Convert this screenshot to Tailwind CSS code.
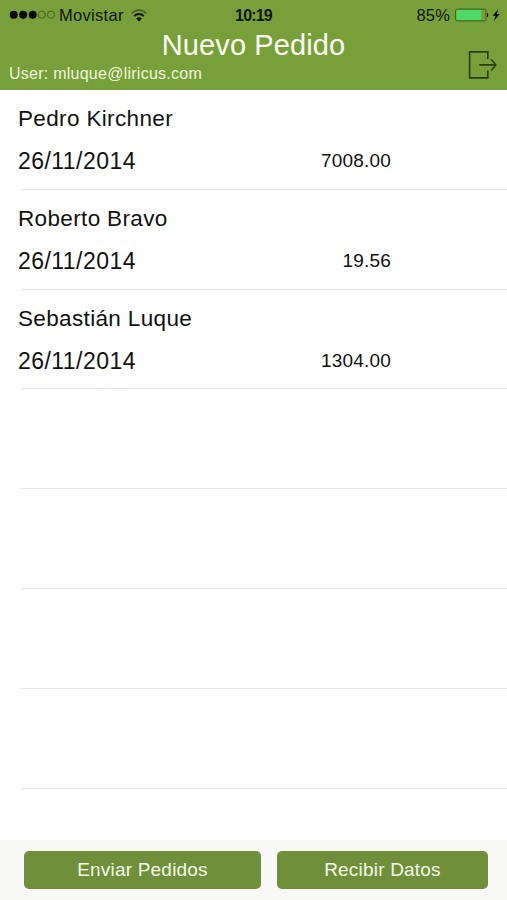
<!DOCTYPE html>
<html lang="es">
<head>
  <meta charset="utf-8">
  <meta name="viewport" content="width=device-width, initial-scale=1">
  <title>Nuevo Pedido</title>
  <script src="https://cdn.jsdelivr.net/npm/@tailwindcss/browser@4"></script>
</head>
<body class="bg-white font-['Liberation_Sans',Arial,sans-serif]">
<div class="flex h-[900px] w-[507px] flex-col overflow-hidden bg-white text-[#111]">

  <header class="h-[90px] shrink-0 bg-[#78a03a]">
    <!-- Status bar -->
    <div class="grid h-[30px] grid-cols-3 items-center text-[#0c1604]">
      <div class="flex h-[29px] items-center pl-[9px]">
        <svg class="h-[10px] w-[47px]" viewBox="0 0 47 10">
          <g fill="#050a02"><circle cx="4.7" cy="4.7" r="4"/><circle cx="14.2" cy="4.7" r="4"/><circle cx="23.7" cy="4.7" r="4"/></g>
          <g fill="none" stroke="#3f5a1c" stroke-width=".9"><circle cx="32.7" cy="4.7" r="3.6"/><circle cx="42" cy="4.7" r="3.6"/></g>
        </svg>
        <span class="ml-[3px] pt-px text-[16.5px] leading-[29px] tracking-[0.3px]">Movistar</span>
        <svg class="ml-[7px] h-[13px] w-[16px]" viewBox="0 0 16 13" fill="none">
          <path d="M.8 4.5C4.8.1 11.2.1 15.2 4.5" stroke="#456020" stroke-width="1.7"/>
          <path d="M3.2 7.1c2.7-2.9 6.9-2.9 9.6 0" stroke="#0c1604" stroke-width="1.9"/>
          <path d="M8 12.4 5.2 9.5c1.5-1.6 4.1-1.6 5.6 0z" fill="#0c1604"/>
        </svg>
      </div>
      <div class="pt-px text-center text-[16px] leading-[29px] font-bold tracking-[-0.8px]">10:19</div>
      <div class="flex h-[29px] items-center justify-end pr-[6px]">
        <span class="pt-px text-[16.5px] leading-[29px] tracking-[0.2px]">85%</span>
        <svg class="ml-[5px] h-[14px] w-[46px]" viewBox="0 0 46 14">
          <rect x=".6" y="1.1" width="30.4" height="11.8" rx="1.6" fill="#78a03a" stroke="#34601c" stroke-width="1"/>
          <rect x="1.4" y="1.9" width="24.8" height="10.2" rx=".8" fill="#4cda64"/>
          <path d="M32 4.9c1.7.5 1.7 3.7 0 4.2z" fill="#0c1604"/>
          <path d="m43.2 1.2-5.7 6.6h3.1l-1.7 5 6-6.9h-3.1z" fill="#050a02"/>
        </svg>
      </div>
    </div>

    <!-- Title, user and logout -->
    <div class="relative h-[60px] text-[#fbfff4]">
      <h1 class="text-center text-[29px] leading-[30px] tracking-[0.1px]">Nuevo Pedido</h1>
      <p class="pl-[9px] text-[16px] leading-[28px] tracking-[0.25px] text-[#edf8dc]">User: mluque@liricus.com</p>
      <svg class="absolute top-[20px] left-[468px] h-[30px] w-[30px]" viewBox="0 0 30 30" fill="none" stroke="#2a3d12" stroke-width="1.6">
        <path d="M19.8 9V1.9H1.6v26h18.2V20.6"/>
        <path d="M11.3 14.9h16.4M23.2 9.2 27.8 14.9 23.2 20.6"/>
      </svg>
    </div>
  </header>

  <!-- Orders -->
  <ul class="h-[750px] shrink-0 overflow-hidden">
    <li class="flex h-[99.8px] flex-col pt-[12px] pl-[18px]">
      <div class="h-[42.5px] text-[22.5px] leading-[34px] tracking-[0.35px]">Pedro Kirchner</div>
      <div class="flex h-[34px] w-[373px] items-center justify-between">
        <span class="text-[23px] tracking-[0.45px]">26/11/2014</span>
        <span class="text-[19px] tracking-[0.2px]">7008.00</span>
      </div>
      <div class="mt-auto ml-[3px] h-px bg-[#e6e6e6]"></div>
    </li>
    <li class="flex h-[99.8px] flex-col pt-[12px] pl-[18px]">
      <div class="h-[42.5px] text-[22.5px] leading-[34px] tracking-[0.35px]">Roberto Bravo</div>
      <div class="flex h-[34px] w-[373px] items-center justify-between">
        <span class="text-[23px] tracking-[0.45px]">26/11/2014</span>
        <span class="text-[19px] tracking-[0.2px]">19.56</span>
      </div>
      <div class="mt-auto ml-[3px] h-px bg-[#e6e6e6]"></div>
    </li>
    <li class="flex h-[99.8px] flex-col pt-[12px] pl-[18px]">
      <div class="h-[42.5px] text-[22.5px] leading-[34px] tracking-[0.35px]">Sebastián Luque</div>
      <div class="flex h-[34px] w-[373px] items-center justify-between">
        <span class="text-[23px] tracking-[0.45px]">26/11/2014</span>
        <span class="text-[19px] tracking-[0.2px]">1304.00</span>
      </div>
      <div class="mt-auto ml-[3px] h-px bg-[#e6e6e6]"></div>
    </li>
    <li class="flex h-[99.8px] flex-col justify-end pl-[21px]"><div class="h-px bg-[#e6e6e6]"></div></li>
    <li class="flex h-[99.8px] flex-col justify-end pl-[21px]"><div class="h-px bg-[#e6e6e6]"></div></li>
    <li class="flex h-[99.8px] flex-col justify-end pl-[21px]"><div class="h-px bg-[#e6e6e6]"></div></li>
    <li class="flex h-[99.8px] flex-col justify-end pl-[21px]"><div class="h-px bg-[#e6e6e6]"></div></li>
  </ul>

  <footer class="flex h-[60px] shrink-0 gap-4 bg-[#f8f8f7] pt-[11px] pl-6">
    <button type="button" class="h-[38px] w-[237px] rounded-[5px] bg-[#6f8f3a] text-[19px] tracking-[0.2px] text-[#f2fbe6]">Enviar Pedidos</button>
    <button type="button" class="h-[38px] w-[211px] rounded-[5px] bg-[#6f8f3a] text-[19px] tracking-[0.2px] text-[#f2fbe6]">Recibir Datos</button>
  </footer>

</div>
</body>
</html>
